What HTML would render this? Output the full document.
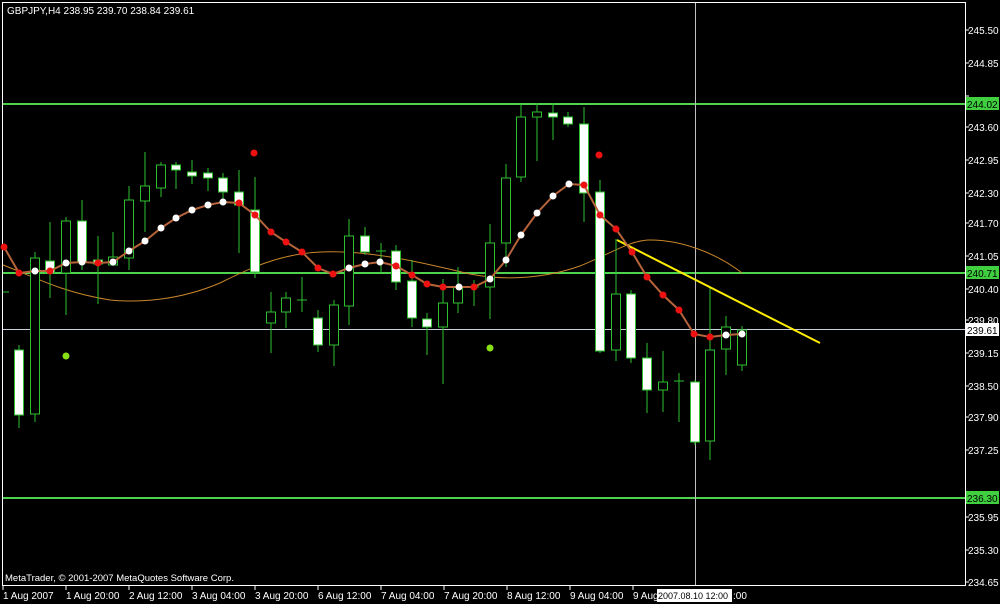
<!DOCTYPE html>
<html><head><meta charset="utf-8"><style>
html,body{margin:0;padding:0;background:#000;width:1000px;height:604px;overflow:hidden}
svg{display:block}
text{font-family:"Liberation Sans",sans-serif;font-size:10px;fill:#fff}
.k line{stroke:#2ec02e;stroke-width:1}
.w{fill:#fff;stroke:#2ec02e;stroke-width:1}
.h{fill:#000;stroke:#2ec02e;stroke-width:1}
</style></head><body>
<svg width="1000" height="604" viewBox="0 0 1000 604" xmlns="http://www.w3.org/2000/svg">
<rect width="1000" height="604" fill="#000"/>
<rect x="2.5" y="2.5" width="963" height="583" fill="none" stroke="#fff" stroke-width="1"/>
<line x1="3" y1="104" x2="965" y2="104" stroke="#4fd34f" stroke-width="2"/>
<line x1="3" y1="273" x2="965" y2="273" stroke="#4fd34f" stroke-width="2"/>
<line x1="3" y1="498" x2="965" y2="498" stroke="#4fd34f" stroke-width="2"/>
<line x1="3" y1="329.5" x2="965" y2="329.5" stroke="#c8d0dc" stroke-width="1"/>
<line x1="695.5" y1="3" x2="695.5" y2="585" stroke="#c0c0c0" stroke-width="1"/>
<path d="M3,265 C30,275 60,292 110,300 C140,303 180,300 220,283 C250,268 280,254 320,252 C370,250 420,262 470,274 C500,280 540,280 580,266 C610,254 630,240 650,240 C680,240 715,252 742,273" fill="none" stroke="#c8862a" stroke-width="1"/>
<g class="k">
<line x1="19" y1="345" x2="19" y2="428"/><rect class="w" x="14.5" y="350" width="9" height="65"/>
<line x1="35" y1="252" x2="35" y2="422"/><rect class="h" x="30.5" y="258" width="9" height="156"/>
<line x1="50" y1="222" x2="50" y2="298"/><rect class="w" x="45.5" y="261" width="9" height="12"/>
<line x1="66" y1="217" x2="66" y2="315"/><rect class="h" x="61.5" y="221" width="9" height="52"/>
<line x1="82" y1="200" x2="82" y2="270"/><rect class="w" x="77.5" y="221" width="9" height="41"/>
<line x1="98" y1="236" x2="98" y2="304"/><rect class="w" x="93.5" y="260" width="9" height="4"/>
<line x1="113" y1="232" x2="113" y2="266"/><rect class="h" x="108.5" y="257" width="9" height="8"/>
<line x1="129" y1="186" x2="129" y2="270"/><rect class="h" x="124.5" y="200" width="9" height="58"/>
<line x1="145" y1="152" x2="145" y2="232"/><rect class="h" x="140.5" y="186" width="9" height="15"/>
<line x1="161" y1="162" x2="161" y2="197"/><rect class="h" x="156.5" y="165" width="9" height="23"/>
<line x1="176" y1="162" x2="176" y2="189"/><rect class="w" x="171.5" y="165" width="9" height="5"/>
<line x1="192" y1="160" x2="192" y2="184"/><rect class="w" x="187.5" y="172" width="9" height="4"/>
<line x1="208" y1="168" x2="208" y2="191"/><rect class="w" x="203.5" y="173" width="9" height="5"/>
<line x1="223" y1="173" x2="223" y2="200"/><rect class="w" x="218.5" y="178" width="9" height="14"/>
<line x1="239" y1="170" x2="239" y2="253"/><rect class="w" x="234.5" y="192" width="9" height="13"/>
<line x1="255" y1="177" x2="255" y2="278"/><rect class="w" x="250.5" y="210" width="9" height="62"/>
<line x1="271" y1="292" x2="271" y2="353"/><rect class="h" x="266.5" y="312" width="9" height="11"/>
<line x1="286" y1="292" x2="286" y2="328"/><rect class="h" x="281.5" y="298" width="9" height="14"/>
<line x1="302" y1="277" x2="302" y2="312"/><line x1="297" y1="300" x2="307" y2="300"/>
<line x1="318" y1="310" x2="318" y2="352"/><rect class="w" x="313.5" y="318" width="9" height="27"/>
<line x1="334" y1="300" x2="334" y2="366"/><rect class="h" x="329.5" y="305" width="9" height="40"/>
<line x1="349" y1="219" x2="349" y2="325"/><rect class="h" x="344.5" y="236" width="9" height="70"/>
<line x1="365" y1="227" x2="365" y2="255"/><rect class="w" x="360.5" y="236" width="9" height="16"/>
<line x1="381" y1="243" x2="381" y2="273"/><line x1="376" y1="251" x2="386" y2="251"/>
<line x1="396" y1="245" x2="396" y2="290"/><rect class="w" x="391.5" y="251" width="9" height="31"/>
<line x1="412" y1="260" x2="412" y2="327"/><rect class="w" x="407.5" y="281" width="9" height="37"/>
<line x1="427" y1="313" x2="427" y2="355"/><rect class="w" x="422.5" y="319" width="9" height="8"/>
<line x1="443" y1="279" x2="443" y2="384"/><rect class="h" x="438.5" y="303" width="9" height="24"/>
<line x1="458" y1="267" x2="458" y2="313"/><rect class="h" x="453.5" y="287" width="9" height="16"/>
<line x1="474" y1="280" x2="474" y2="306"/><line x1="469" y1="287" x2="479" y2="287"/>
<line x1="490" y1="224" x2="490" y2="319"/><rect class="h" x="485.5" y="243" width="9" height="44"/>
<line x1="506" y1="164" x2="506" y2="267"/><rect class="h" x="501.5" y="178" width="9" height="65"/>
<line x1="521" y1="104" x2="521" y2="182"/><rect class="h" x="516.5" y="117" width="9" height="60"/>
<line x1="537" y1="103" x2="537" y2="161"/><rect class="h" x="532.5" y="112" width="9" height="5"/>
<line x1="553" y1="103" x2="553" y2="140"/><rect class="w" x="548.5" y="113" width="9" height="4"/>
<line x1="568" y1="112" x2="568" y2="127"/><rect class="w" x="563.5" y="117" width="9" height="7"/>
<line x1="584" y1="107" x2="584" y2="222"/><rect class="w" x="579.5" y="124" width="9" height="69"/>
<line x1="600" y1="180" x2="600" y2="353"/><rect class="w" x="595.5" y="192" width="9" height="159"/>
<line x1="616" y1="239" x2="616" y2="361"/><rect class="h" x="611.5" y="294" width="9" height="56"/>
<line x1="631" y1="290" x2="631" y2="363"/><rect class="w" x="626.5" y="294" width="9" height="64"/>
<line x1="647" y1="343" x2="647" y2="413"/><rect class="w" x="642.5" y="358" width="9" height="32"/>
<line x1="663" y1="351" x2="663" y2="412"/><rect class="h" x="658.5" y="382" width="9" height="8"/>
<line x1="679" y1="373" x2="679" y2="422"/><line x1="674" y1="381" x2="684" y2="381"/>
<line x1="695" y1="380" x2="695" y2="445"/><rect class="w" x="690.5" y="382" width="9" height="60"/>
<line x1="710" y1="288" x2="710" y2="460"/><rect class="h" x="705.5" y="350" width="9" height="91"/>
<line x1="726" y1="316" x2="726" y2="375"/><rect class="h" x="721.5" y="327" width="9" height="22"/>
<line x1="742" y1="326" x2="742" y2="371"/><rect class="h" x="737.5" y="330" width="9" height="35"/>
<line x1="3" y1="292" x2="9" y2="292"/>
</g>
<line x1="617" y1="240" x2="820" y2="343" stroke="#ffee00" stroke-width="2"/>
<polyline fill="none" stroke="#b8643a" stroke-width="2" points="4,247 19,273 35,271 50,271 66,263 82,262 98,263 113,262 129,251 145,241 161,228 176,218 192,210 208,205 223,202 239,203 255,215 271,232 286,242 302,252 318,268 333,274 349,268 365,264 380,262 396,266 412,275 427,284 443,287 459,287 474,287 490,279 506,260 521,235 537,213 553,196 569,184 584,185 600,215 616,229 632,252 647,277 663,295 679,310 694,334 710,337 726,335 742,334"/>
<g fill="#ee1111">
<circle cx="4" cy="247" r="3.5"/><circle cx="19" cy="273" r="3.5"/><circle cx="50" cy="271" r="3.5"/><circle cx="98" cy="263" r="3.5"/>
<circle cx="239" cy="203" r="3.5"/><circle cx="255" cy="215" r="3.5"/><circle cx="271" cy="232" r="3.5"/><circle cx="286" cy="242" r="3.5"/><circle cx="302" cy="252" r="3.5"/><circle cx="318" cy="268" r="3.5"/><circle cx="333" cy="274" r="3.5"/>
<circle cx="396" cy="266" r="3.5"/><circle cx="412" cy="275" r="3.5"/><circle cx="427" cy="284" r="3.5"/><circle cx="443" cy="287" r="3.5"/><circle cx="474" cy="287" r="3.5"/>
<circle cx="584" cy="185" r="3.5"/><circle cx="600" cy="215" r="3.5"/><circle cx="616" cy="229" r="3.5"/><circle cx="632" cy="252" r="3.5"/><circle cx="647" cy="277" r="3.5"/><circle cx="663" cy="295" r="3.5"/><circle cx="679" cy="310" r="3.5"/><circle cx="694" cy="334" r="3.5"/><circle cx="710" cy="337" r="3.5"/>
<circle cx="254" cy="153" r="3.5"/><circle cx="599" cy="155" r="3.5"/>
</g>
<g fill="#fff">
<circle cx="35" cy="271" r="3.5"/><circle cx="66" cy="263" r="3.5"/><circle cx="82" cy="262" r="3.5"/><circle cx="113" cy="262" r="3.5"/><circle cx="129" cy="251" r="3.5"/><circle cx="145" cy="241" r="3.5"/><circle cx="161" cy="228" r="3.5"/><circle cx="176" cy="218" r="3.5"/><circle cx="192" cy="210" r="3.5"/><circle cx="208" cy="205" r="3.5"/><circle cx="223" cy="202" r="3.5"/>
<circle cx="349" cy="268" r="3.5"/><circle cx="365" cy="264" r="3.5"/><circle cx="380" cy="262" r="3.5"/><circle cx="459" cy="287" r="3.5"/><circle cx="490" cy="279" r="3.5"/><circle cx="506" cy="260" r="3.5"/><circle cx="521" cy="235" r="3.5"/><circle cx="537" cy="213" r="3.5"/><circle cx="553" cy="196" r="3.5"/><circle cx="569" cy="184" r="3.5"/>
<circle cx="726" cy="335" r="3.5"/><circle cx="742" cy="334" r="3.5"/>
</g>
<g fill="#88e016"><circle cx="66" cy="356" r="3.5"/><circle cx="490" cy="348" r="3.5"/></g>
<text x="7" y="14">GBPJPY,H4  238.95 239.70 238.84 239.61</text>
<text x="5" y="581" style="font-size:9.5px">MetaTrader, © 2001-2007 MetaQuotes Software Corp.</text>
<g stroke="#fff" stroke-width="1">
<line x1="965" y1="30" x2="969" y2="30"/><line x1="965" y1="63" x2="969" y2="63"/><line x1="965" y1="96" x2="969" y2="96"/><line x1="965" y1="127" x2="969" y2="127"/><line x1="965" y1="160" x2="969" y2="160"/><line x1="965" y1="193" x2="969" y2="193"/><line x1="965" y1="223" x2="969" y2="223"/><line x1="965" y1="256" x2="969" y2="256"/><line x1="965" y1="289" x2="969" y2="289"/><line x1="965" y1="320" x2="969" y2="320"/><line x1="965" y1="353" x2="969" y2="353"/><line x1="965" y1="386" x2="969" y2="386"/><line x1="965" y1="417" x2="969" y2="417"/><line x1="965" y1="450" x2="969" y2="450"/><line x1="965" y1="517" x2="969" y2="517"/><line x1="965" y1="550" x2="969" y2="550"/><line x1="965" y1="582" x2="969" y2="582"/>
</g>
<g>
<text x="968" y="34">245.50</text><text x="968" y="67">244.85</text><text x="968" y="131">243.60</text><text x="968" y="164">242.95</text><text x="968" y="197">242.30</text><text x="968" y="227">241.70</text><text x="968" y="260">241.05</text><text x="968" y="293">240.40</text><text x="968" y="324">239.80</text><text x="968" y="357">239.15</text><text x="968" y="390">238.50</text><text x="968" y="421">237.90</text><text x="968" y="454">237.25</text><text x="968" y="521">235.95</text><text x="968" y="554">235.30</text><text x="968" y="586">234.65</text>
</g>
<rect x="966" y="97" width="33" height="13" fill="#3fcf3f"/><text x="967" y="108" style="fill:#000">244.02</text>
<rect x="966" y="266" width="33" height="13" fill="#3fcf3f"/><text x="967" y="277" style="fill:#000">240.71</text>
<rect x="966" y="491" width="33" height="13" fill="#3fcf3f"/><text x="967" y="502" style="fill:#000">236.30</text>
<rect x="966" y="323" width="33" height="13" fill="#fff"/><text x="967" y="334" style="fill:#000">239.61</text>
<g stroke="#fff"><line x1="3" y1="586" x2="3" y2="590"/><line x1="66" y1="586" x2="66" y2="590"/><line x1="129" y1="586" x2="129" y2="590"/><line x1="192" y1="586" x2="192" y2="590"/><line x1="255" y1="586" x2="255" y2="590"/><line x1="318" y1="586" x2="318" y2="590"/><line x1="381" y1="586" x2="381" y2="590"/><line x1="444" y1="586" x2="444" y2="590"/><line x1="507" y1="586" x2="507" y2="590"/><line x1="570" y1="586" x2="570" y2="590"/><line x1="633" y1="586" x2="633" y2="590"/></g>
<g style="font-size:9.5px">
<text x="3" y="599">1 Aug 2007</text><text x="66" y="599">1 Aug 20:00</text><text x="129" y="599">2 Aug 12:00</text><text x="192" y="599">3 Aug 04:00</text><text x="255" y="599">3 Aug 20:00</text><text x="318" y="599">6 Aug 12:00</text><text x="381" y="599">7 Aug 04:00</text><text x="444" y="599">7 Aug 20:00</text><text x="507" y="599">8 Aug 12:00</text><text x="570" y="599">9 Aug 04:00</text><text x="633" y="599">9 Aug</text><text x="733" y="599">:00</text>
</g>
<rect x="657" y="589" width="75" height="13" fill="#fff"/>
<text x="658" y="599" style="fill:#000;font-size:9px">2007.08.10 12:00</text>
</svg>
</body></html>
